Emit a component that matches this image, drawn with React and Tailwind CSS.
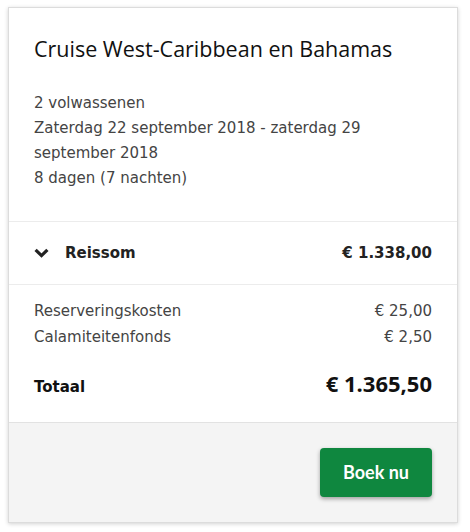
export default function App() {
  return (
    <div className="w-[470px] h-[532px] bg-white pt-[7px] pl-[8px]">
      <div className="w-[450px] border border-[#dcdcdc] shadow-[0_1px_4px_rgba(0,0,0,0.18)] bg-white">
        {/* Trip summary */}
        <div className="px-[25px] pt-[27px] pb-[30px]">
          <h2 className="text-[21.5px] leading-[28px] text-[#111] font-['Open_Sans',sans-serif]">
            Cruise West-Caribbean en Bahamas
          </h2>
          <div className="mt-[28px] text-[15px] leading-[25px] text-[#444] font-['DejaVu_Sans',Verdana,sans-serif]">
            <p>2 volwassenen</p>
            <p>Zaterdag 22 september 2018 - zaterdag 29 september 2018</p>
            <p>8 dagen (7 nachten)</p>
          </div>
        </div>

        {/* Reissom */}
        <div className="h-[63px] border-t border-[#ececec] px-[25px] flex items-center justify-between font-['DejaVu_Sans',Verdana,sans-serif] text-[15px] font-bold text-[#222]">
          <div className="flex items-center gap-[16px]">
            <svg width="15" height="10" viewBox="0 0 15 10">
              <path d="M1.6 1.8 L7.5 7.6 L13.4 1.8" fill="none" stroke="#222" strokeWidth="3.2" />
            </svg>
            <span>Reissom</span>
          </div>
          <span>€ 1.338,00</span>
        </div>

        {/* Kosten */}
        <div className="border-t border-[#ececec] px-[25px] pt-[14px] pb-[23px] font-['DejaVu_Sans',Verdana,sans-serif] text-[15px] text-[#444]">
          <div className="flex justify-between leading-[25.5px]">
            <span>Reserveringskosten</span>
            <span>€ 25,00</span>
          </div>
          <div className="flex justify-between leading-[25.5px]">
            <span>Calamiteitenfonds</span>
            <span>€ 2,50</span>
          </div>
          <div className="flex justify-between items-baseline mt-[19px] text-[#111] font-bold">
            <span className="text-[15px]">Totaal</span>
            <span className="text-[22px] leading-[28px] font-['Open_Sans',sans-serif]">€ 1.365,50</span>
          </div>
        </div>

        {/* Footer */}
        <div className="h-[100px] bg-[#f4f4f4] border-t border-[#e2e2e2] px-[25px] flex items-center justify-end">
          <button className="w-[112px] h-[49px] rounded-[4px] bg-[#0f873f] text-white text-[18px] font-bold font-['Lato',sans-serif] shadow-[0_2px_4px_rgba(0,0,0,0.35)]">
            Boek nu
          </button>
        </div>
      </div>
    </div>
  );
}
